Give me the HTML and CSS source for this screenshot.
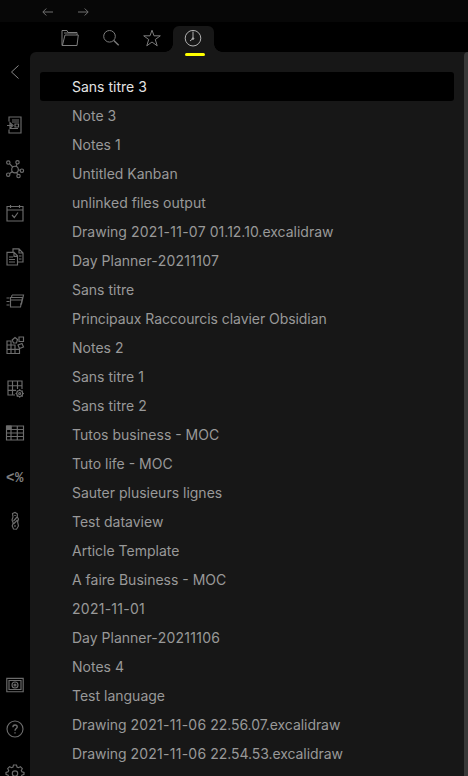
FILE: index.html
```html
<!DOCTYPE html>
<html lang="fr">
<head>
<meta charset="utf-8">
<title>Obsidian</title>
<link rel="stylesheet" href="styles.css">
</head>
<body>
<header class="titlebar">
  <svg class="arrow" viewBox="0 0 12 8"><path d="M11 4H1M4.300 .5 .8 4l3.500 3.500"/></svg>
  <svg class="arrow" viewBox="0 0 12 8"><path d="M1 4h10M7.700 .5 11.200 4 7.700 7.500"/></svg>
</header>
<div class="workspace">
  <nav class="rail">
    <svg class="icon collapse" viewBox="0 0 18 18"><path d="M12.500 2.500 5.500 9l7 6.500"/></svg>
    <div class="group">
      <svg class="icon" viewBox="0 0 18 18"><path d="M3 5.500V1h12v16H3v-3.500M6 4h7M6 6h7M1 9.500h5M4 6.800l3 2.700-3 2.700zM9 8h3.500v3H9zM4.500 12.500H12"/></svg>
      <svg class="icon" viewBox="0 0 18 18"><circle cx="9" cy="9.500" r="3.300"/><circle cx="2.300" cy="2.500" r="1.700"/><circle cx="11.500" cy="2.300" r="1.700"/><circle cx="15.900" cy="10.700" r="1.700"/><circle cx="2.200" cy="14.700" r="1.700"/><circle cx="12.500" cy="16" r="1.700"/><path d="m3.500 3.700 3.200 3.300M11 4l-1 2.400M12.200 9.800l2 .4M6.500 11.500l-2.800 2M10.500 12.300l1.300 2.400"/></svg>
      <svg class="icon" viewBox="0 0 18 18"><path d="M1 2.500h16v14.500H1zM1 6h16M4.500 1v3M13.500 1v3M6 11l2.300 2.500L12 8.500"/></svg>
      <svg class="icon" viewBox="0 0 18 18"><path d="M7 4V.8h6L17 5v9h-5M13 .8V5h4M1 4.300h7l3.500 3.500V17H1zM8 4.300v4h3.500M3 9h4M3 11.500h6M3 14h6M13 8h2.500M13 11h2.500"/></svg>
      <svg class="icon" viewBox="0 0 18 18"><path d="M6 3h11.500l-2 9H14M6 3 5.600 5M4.500 5.500h12l-2 9.500H4.500zM4 8h12M.5 6h3M.5 9.500h3M.5 13h3"/></svg>
      <svg class="icon" viewBox="0 0 18 18"><path d="M1 5h4v12.500H1zM1 9h8v8.500M1 13.300h12.500v4.200H1M13 1h4.500v4.500H13zM12 9l4-1.500L17.500 11l-4 1.500zM9 1.500l2.500 2-1 3.500H7.500l-1.300-3zM5 9v8.500"/></svg>
      <svg class="icon" viewBox="0 0 18 18"><path d="M9 15H2V1h14v8M2 5.700h14M2 10.300h8M6.500 1v14M11.500 1v8"/><circle cx="13.700" cy="13.500" r="3"/><circle cx="13.700" cy="13.500" r="1"/><path d="M13.700 9.300v1.500M13.700 16.200v1.500M9.500 13.500H11M16.400 13.500h1.500M10.800 10.600l1 1M15.700 15.500l1 1M16.700 10.600l-1 1M11.800 15.500l-1 1"/></svg>
      <svg class="icon" viewBox="0 0 18 18"><path d="M.5 2h17v14H.5zM.5 5.500h17M.5 9h17M.5 12.500h17M5 2v14M11.300 2v14"/><path class="solid" d="M1 2h4v3.500H1z"/></svg>
      <span class="icon template">&lt;%</span>
      <svg class="icon" viewBox="0 0 18 18"><path d="M6.500 1.500 9 .5l2.300 1.300V5l1.200 2-.9 3 .9 4-2 3.200-3-.2-1.300-3 1-3L6 8l1-3zM8.300 3.500h1.500M11 5 7.500 9M11.500 8 7.500 12M9 13v2"/></svg>
    </div>
    <div class="group bottom">
      <svg class="icon" viewBox="0 0 18 18"><path d="M.8 2.300h16.400v13.400H.8zM3 4.500h12v9H3z"/><circle cx="9" cy="9" r="3"/><circle cx="9" cy="9" r="1"/></svg>
      <svg class="icon" viewBox="0 0 18 18"><circle cx="9" cy="9" r="8"/><path class="bold" d="M6.900 7.200c0-3 4.300-2.800 4.300-.2C11.200 8.500 9 8.700 9 10.700M9 12.300v1.200"/></svg>
      <svg class="icon" viewBox="0 0 18 18"><path d="M7.500 1h3l.5 2 1.400.7 2-1 1.900 2-1 1.800.6 1.300 2.100.6v2l-2.100.7-.6 1.400 1 1.900-1.900 1.900-2-1-1.400.6-.5 2h-3l-.5-2-1.400-.6-2 1-1.900-1.900 1-1.900-.6-1.400L0 10.400v-2l2.100-.6.6-1.300-1-1.800 1.900-2 2 1L7 3z"/><circle cx="9" cy="9.500" r="2.700"/></svg>
    </div>
  </nav>
  <main class="sidebar">
    <div class="tabs">
      <div class="tab"><svg class="icon" viewBox="0 0 18 18"><path d="M1 16.500v-15h5l1 2h9V6M1 16.500h15L17.300 6H4L1.500 16M3 4h12"/></svg></div>
      <div class="tab"><svg class="icon" viewBox="0 0 18 18"><circle cx="7.500" cy="7.300" r="5.800"/><path class="bold" d="m11.800 11.500 4.900 4.700"/></svg></div>
      <div class="tab"><svg class="icon" viewBox="0 0 18 18"><path d="m9 1.200 2 5.600h6.300l-5 3.700 1.900 6.300L9 13l-5.200 3.800 1.900-6.300-5-3.700H7z"/></svg></div>
      <div class="tab active"><svg class="icon" viewBox="0 0 18 18"><circle cx="9" cy="9.200" r="7.800"/><path d="M9 2.500v7l-3 2.500"/><circle class="solid" cx="9" cy="9.600" r=".8"/></svg></div>
    </div>
    <div class="panel">
      <ul class="files">
        <li class="current">Sans titre 3</li>
        <li>Note 3</li>
        <li>Notes 1</li>
        <li>Untitled Kanban</li>
        <li>unlinked files output</li>
        <li>Drawing <span class="date">2021-11-07</span> 01.12.10.excalidraw</li>
        <li>Day Planner-<span class="date">20211107</span></li>
        <li>Sans titre</li>
        <li class="long">Principaux Raccourcis clavier Obsidian</li>
        <li>Notes 2</li>
        <li>Sans titre 1</li>
        <li>Sans titre 2</li>
        <li>Tutos business - MOC</li>
        <li>Tuto life - MOC</li>
        <li>Sauter plusieurs lignes</li>
        <li>Test dataview</li>
        <li>Article Template</li>
        <li>A faire Business - MOC</li>
        <li><span class="date">2021-11-01</span></li>
        <li>Day Planner-<span class="date">20211106</span></li>
        <li>Notes 4</li>
        <li>Test language</li>
        <li class="long">Drawing <span class="date">2021-11-06</span> 22.56.07.excalidraw</li>
        <li class="long">Drawing <span class="date">2021-11-06</span> 22.54.53.excalidraw</li>
      </ul>
      <div class="editor-edge"></div>
    </div>
  </main>
</div>
</body>
</html>
```
FILE: styles.css
```css
* { box-sizing: border-box; }
body {
  margin: 0;
  height: 776px;
  overflow: hidden;
  background: #000;
  color: #999;
  font: 14px/29px Inter, sans-serif;
}
svg {
  display: block;
  fill: none;
  stroke: currentColor;
  stroke-width: 1;
  overflow: visible;
}
.titlebar {
  display: flex;
  align-items: center;
  gap: 23px;
  height: 22px;
  padding: 1px 0 0 41.500px;
  background: #070707;
  color: #707070;
}
.arrow { width: 12px; height: 8px; }
.workspace { display: flex; height: 754px; }
.rail {
  display: flex;
  flex-direction: column;
  flex: 0 0 30px;
  align-items: center;
  padding-top: 41px;
  color: #6c6c6c;
}
.rail svg { stroke-width: 1.15; }
.icon { width: 18px; height: 18px; flex: none; }
.rail .collapse { margin-bottom: 35px; color: #888; stroke-width: 1; }
.group { display: flex; flex-direction: column; gap: 26px; }
.bottom { margin-top: 146px; }
.template {
  display: flex;
  justify-content: center;
  color: #808080;
  font: 700 14px/20px "Liberation Mono", monospace;
  letter-spacing: .5px;
}
.solid { fill: currentColor; }
.rail .bold, .bold { stroke-width: 1.4; }
.sidebar { flex: 1; min-width: 0; }
.tabs {
  position: relative;
  display: flex;
  height: 30px;
  padding: 4px 0 0 20px;
}
.tab {
  display: flex;
  justify-content: center;
  width: 41px;
  height: 26px;
  padding: 3px 1px 0 0;
  color: #7c7c7c;
}
.tab.active {
  position: relative;
  background: #171717;
  border-radius: 6px 6px 0 0;
  color: #b0b0b0;
}
.tab.active::before,
.tab.active::after {
  content: "";
  position: absolute;
  bottom: 0;
  width: 8px;
  height: 8px;
}
.tab.active::before {
  right: 100%;
  background: radial-gradient(circle at 0 0, transparent 7.500px, #171717 8px);
}
.tab.active::after {
  left: 100%;
  background: radial-gradient(circle at 100% 0, transparent 7.500px, #171717 8px);
}
.tabs::after {
  content: "";
  position: absolute;
  left: 155px;
  top: 31px;
  width: 20px;
  height: 3px;
  border-radius: 2px;
  background: #ff0;
}
.panel {
  display: flex;
  height: 724px;
  background: #171717;
  border-radius: 6px 0 0 0;
}
.files {
  flex: 1;
  margin: 0;
  padding: 20px 10px 0;
  list-style: none;
}
.files li {
  height: 29px;
  padding-left: 32px;
  border-radius: 3px;
  white-space: nowrap;
}
.files .long { letter-spacing: -.06px; }
.files .date { letter-spacing: .26px; }
.files .current { background: #000; color: #e4e4e4; }
.editor-edge {
  width: 4px;
  background: #383838;
  border-radius: 4px 0 0 0;
}
```
